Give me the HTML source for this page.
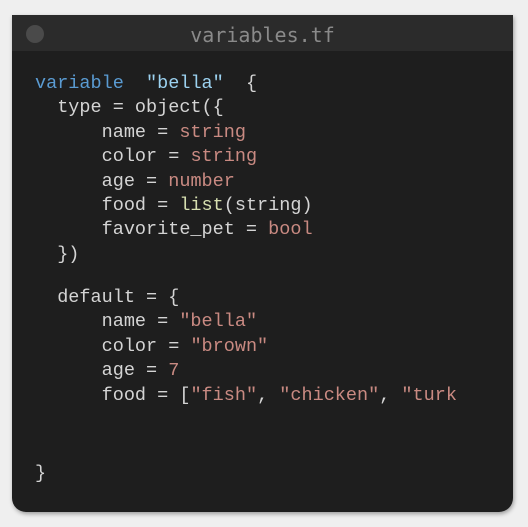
<!DOCTYPE html>
<html><head><style>
html,body{margin:0;padding:0;width:528px;height:527px;background:#efefef;overflow:hidden}
.win{position:absolute;left:12px;top:15px;width:501px;height:497px;background:#1e1e1e;border-radius:0 0 14px 14px;box-shadow:1px 2px 4px rgba(0,0,0,.35);overflow:hidden}
.bar{position:absolute;left:0;top:0;width:100%;height:36px;background:#2b2b2b}
.dot{position:absolute;left:14px;top:10px;width:18px;height:18px;border-radius:50%;background:#4a4a4a}
.title{position:absolute;left:0;width:100%;top:7px;text-align:center;font:20px "DejaVu Sans Mono",monospace;color:#8a8a8a;line-height:26px}
.l{position:absolute;left:23px;font:18.5px "Liberation Mono",monospace;color:#d4d4d4;line-height:24px;white-space:pre}
.k{color:#5a9bd2}.s{color:#9cd2f0}.t{color:#c98a82}.f{color:#d6dfb0}
</style></head><body>
<div class="win">
<div class="bar"><div class="dot"></div><div class="title">variables.tf</div></div>
<div class="l" style="top:57px"><span class="k">variable</span>  <span class="s">"bella"</span>  {</div>
<div class="l" style="top:81px">  type = object({</div>
<div class="l" style="top:106px">      name = <span class="t">string</span></div>
<div class="l" style="top:130px">      color = <span class="t">string</span></div>
<div class="l" style="top:155px">      age = <span class="t">number</span></div>
<div class="l" style="top:179px">      food = <span class="f">list</span>(string)</div>
<div class="l" style="top:203px">      favorite_pet = <span class="t">bool</span></div>
<div class="l" style="top:228px">  })</div>
<div class="l" style="top:271px">  default = {</div>
<div class="l" style="top:295px">      name = <span class="t">"bella"</span></div>
<div class="l" style="top:320px">      color = <span class="t">"brown"</span></div>
<div class="l" style="top:344px">      age = <span class="t">7</span></div>
<div class="l" style="top:369px">      food = [<span class="t">"fish"</span>, <span class="t">"chicken"</span>, <span class="t">"turk</span></div>
<div class="l" style="top:447px">}</div>
</div>
</body></html>
